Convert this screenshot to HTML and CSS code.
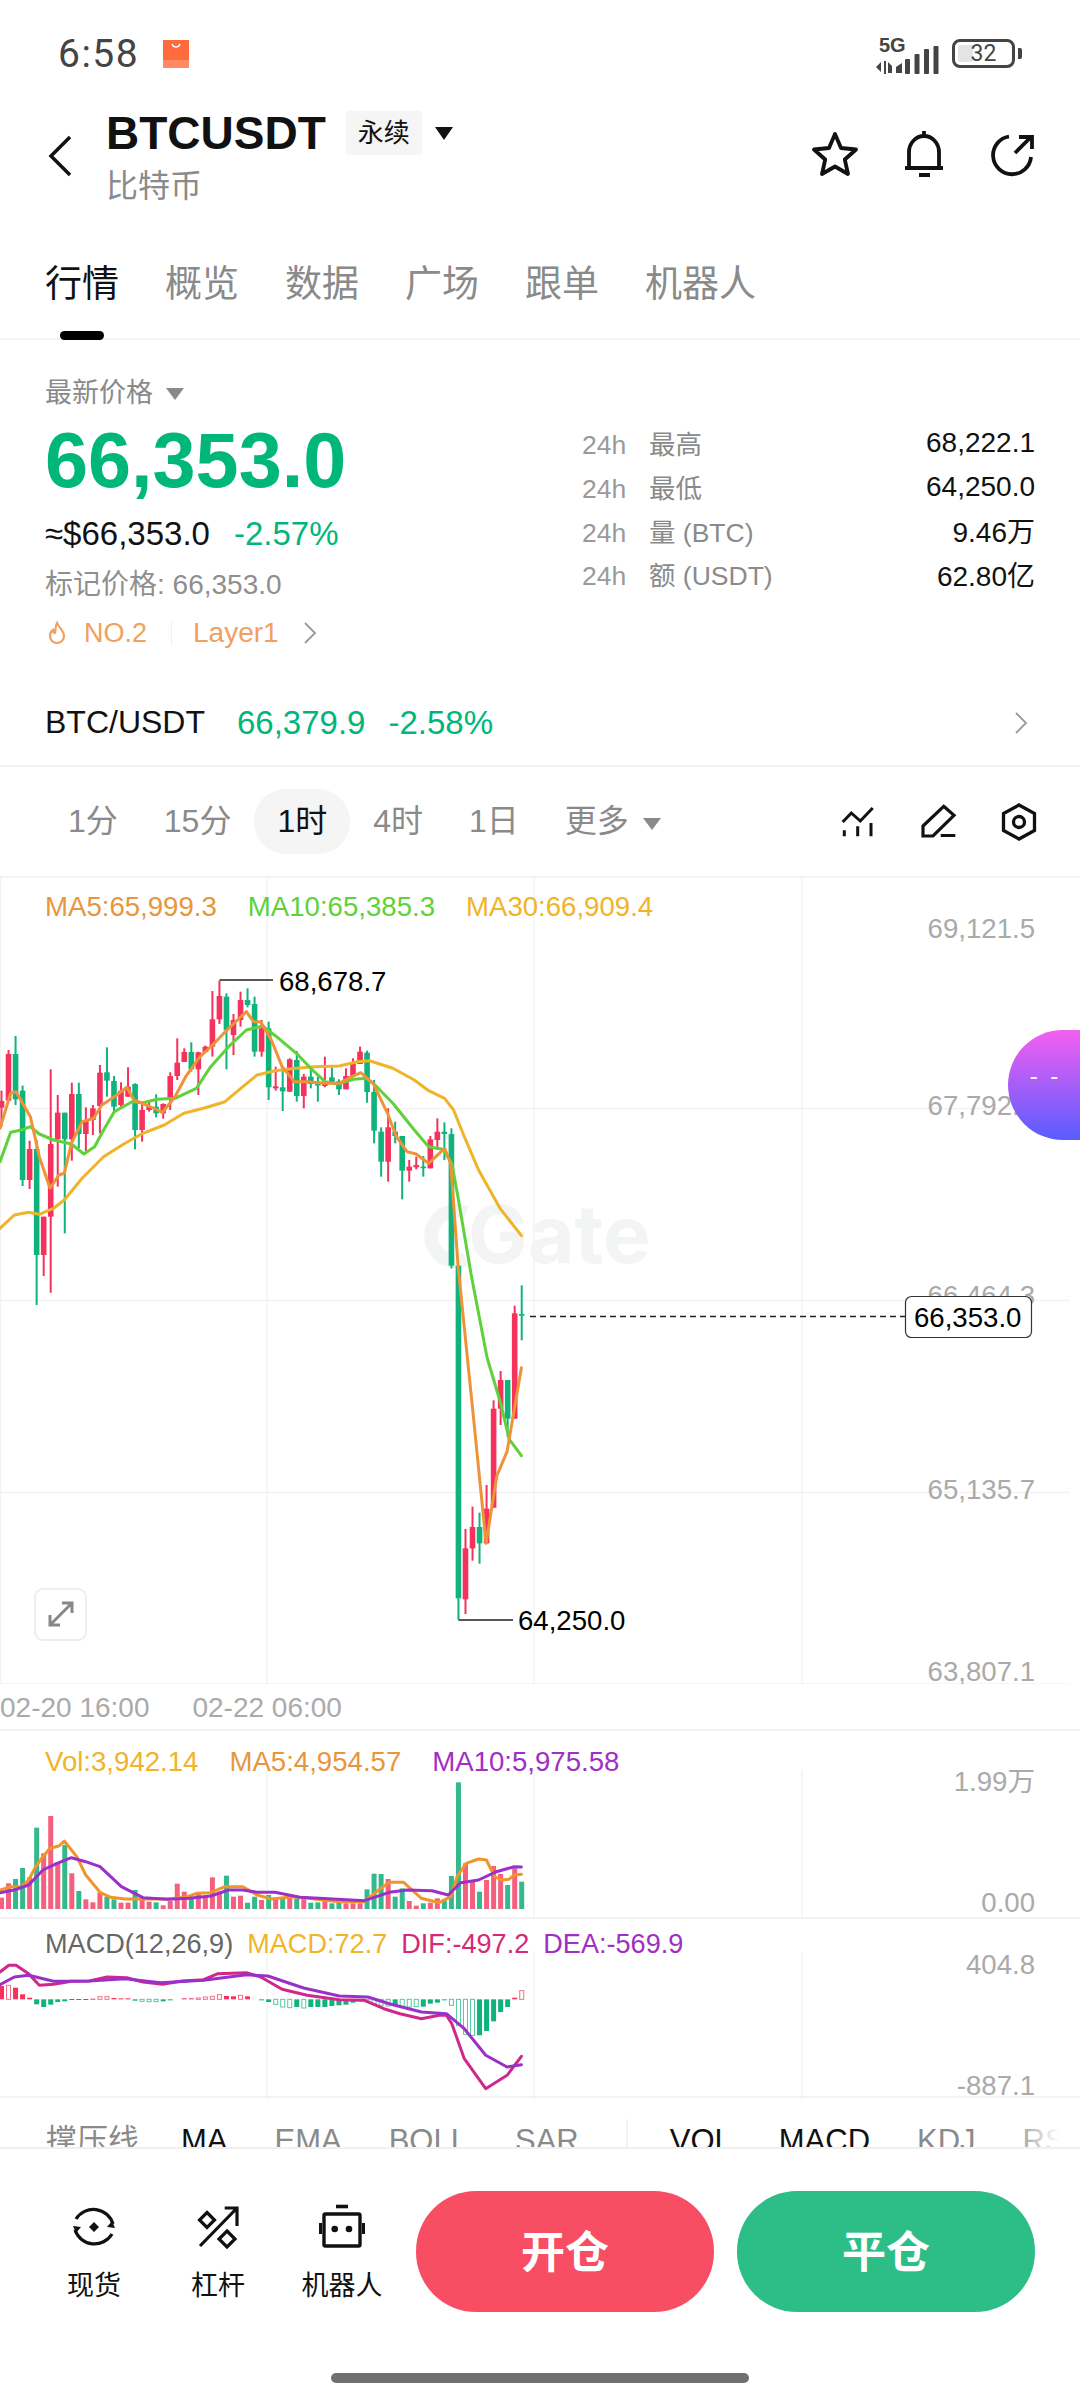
FILE: index.html
```html
<!DOCTYPE html>
<html lang="zh-CN">
<head>
    <meta charset="UTF-8">
    <meta name="viewport" content="width=device-width, initial-scale=1.0">
    <title>BTCUSDT 行情</title>
    <link rel="stylesheet" href="styles.css">
</head>
<body>
    <div class="status-bar">
        <span class="clock">6:58</span>
        <svg class="shop-icon" width="26" height="28" viewBox="0 0 26 28">
            <rect width="26" height="28" fill="#ff6b3d"/>
            <rect y="20" width="26" height="8" fill="#ff8a63"/>
            <path d="M9 4c1 4 7 4 8 0" fill="none" stroke="#fff" stroke-width="1.3"/>
        </svg>
        <div class="status-right">
            <div class="signal">
                <span class="net">5G</span>
                <svg width="64" height="30" viewBox="0 0 64 30">
                    <path d="M5 16l-5 5 5 5zM8 15h2v13H8zM12 16l4 4v7h-4zM20 21l6-4v10h-6z" fill="#444"/>
                    <rect x="29" y="13" width="5" height="15" rx="1" fill="#444"/>
                    <rect x="38.500" y="8" width="5" height="20" rx="1" fill="#444"/>
                    <rect x="48" y="3" width="5" height="25" rx="1" fill="#444"/>
                    <rect x="57.500" y="0" width="5" height="28" rx="1" fill="#444"/>
                </svg>
            </div>
            <div class="battery"><i class="battery-level"></i><span>32</span></div>
            <i class="battery-cap"></i>
        </div>
    </div>

    <div class="topbar">
        <svg class="back" width="24" height="42" viewBox="0 0 24 42">
            <path d="M22 2L3 21l19 19" fill="none" stroke="#111" stroke-width="3.500"/>
        </svg>
        <div class="title-block">
            <div class="title-row">
                <span class="symbol">BTCUSDT</span>
                <span class="tag">永续</span>
                <i class="caret caret-dark"></i>
            </div>
            <div class="coin-name">比特币</div>
        </div>
        <div class="top-actions">
            <svg width="48" height="48" viewBox="0 0 48 48" fill="none" stroke="#111" stroke-width="3.800" stroke-linejoin="round">
                <path d="M24 4l6 14 15 1.500-11.200 10L37 44l-13-7.500L11 44l3.200-14.500L3 19.500 18 18z"/>
            </svg>
            <svg width="48" height="48" viewBox="0 0 48 48" fill="none" stroke="#111" stroke-width="3.800">
                <path d="M9 38V22a15 16 0 0 1 30 0v16M5 38h38M24 1v5"/>
                <rect x="19" y="43" width="11" height="4" fill="#111" stroke="none"/>
            </svg>
            <svg width="48" height="48" viewBox="0 0 48 48" fill="none" stroke="#111" stroke-width="3.800">
                <path d="M20 6.500A19 19 0 1 0 42 27M26 23L42 7M30 7h13v12"/>
            </svg>
        </div>
    </div>

    <div class="tabs">
        <span class="tab active">行情</span>
        <span class="tab">概览</span>
        <span class="tab">数据</span>
        <span class="tab">广场</span>
        <span class="tab">跟单</span>
        <span class="tab">机器人</span>
    </div>

    <div class="summary">
        <div class="summary-left">
            <div class="price-label">最新价格 <i class="caret caret-gray"></i></div>
            <div class="last-price">66,353.0</div>
            <div class="fiat-row"><span>≈$66,353.0</span><span class="down">-2.57%</span></div>
            <div class="mark-price">标记价格: 66,353.0</div>
            <div class="rank-row">
                <svg width="20" height="24" viewBox="0 0 20 24" fill="none" stroke="#f0a060" stroke-width="2.200">
                    <path d="M10 2c1 4 7 7 7 13a7 7 0 0 1-14 0c0-3 1.500-5 3-6 0 2 1 3 2 3 1-3 0-7 2-10z"/>
                </svg>
                <span class="rank rank-no">NO.2</span>
                <i class="rank-divider"></i>
                <span class="rank">Layer1</span>
                <svg class="rank-more" width="14" height="22" viewBox="0 0 14 22">
                    <path d="M2 1l10 10L2 21" fill="none" stroke="#999" stroke-width="1.800"/>
                </svg>
            </div>
        </div>
        <div class="stats">
            <div class="stat"><span class="stat-name"><b>24h</b>最高</span><span class="stat-value">68,222.1</span></div>
            <div class="stat"><span class="stat-name"><b>24h</b>最低</span><span class="stat-value">64,250.0</span></div>
            <div class="stat"><span class="stat-name"><b>24h</b>量 (BTC)</span><span class="stat-value">9.46万</span></div>
            <div class="stat"><span class="stat-name"><b>24h</b>额 (USDT)</span><span class="stat-value">62.80亿</span></div>
        </div>
    </div>

    <div class="spot-row">
        <span>BTC/USDT</span>
        <span class="down spot-price">66,379.9</span>
        <span class="down">-2.58%</span>
        <svg class="spot-more" width="14" height="22" viewBox="0 0 14 22">
            <path d="M2 1l10 10L2 21" fill="none" stroke="#999" stroke-width="1.800"/>
        </svg>
    </div>

    <div class="periods">
        <span class="period">1分</span>
        <span class="period">15分</span>
        <span class="period active">1时</span>
        <span class="period">4时</span>
        <span class="period">1日</span>
        <span class="period">更多 <i class="caret caret-gray"></i></span>
        <div class="chart-tools">
            <svg width="40" height="40" viewBox="0 0 40 40" fill="none" stroke="#111" stroke-width="3">
                <path d="M5.700 20L14.300 11l9 8L35.700 6M7.300 28.300v6M20.700 24.300v10M34 21v13.300"/>
            </svg>
            <svg width="40" height="40" viewBox="0 0 40 40" fill="none" stroke="#111" stroke-width="3.200">
                <path d="M25.700 4.300L36 13.300 15 34H5V24zM22.700 33.500h14.600"/>
            </svg>
            <svg width="40" height="40" viewBox="0 0 40 40" fill="none" stroke="#111" stroke-width="3.300">
                <path d="M20 3l15.500 8.500v17L20 37 4.500 28.500v-17z"/>
                <circle cx="20" cy="20" r="5.500"/>
            </svg>
        </div>
    </div>

    <div class="kline">
        <svg class="pane-svg" width="1080" height="806" viewBox="0 878 1080 806">
            <path class="grid" d="M267 878V1684M534 878V1684M802 878V1684M0 1108.500H1070M0 1300.500H1070M0 1492.500H1070M0 1684H1070M0.500 878V1684"/>
            <g class="watermark">
                <path d="M466 1213a25 25 0 1 0 0 46" fill="none" stroke="#f3f5f5" stroke-width="14"/>
                <text x="468" y="1263">Gate</text>
            </g>
            <g id="candles"></g>
            <g id="kline-lines"></g>
            <text class="axis" x="1035" y="938">69,121.5</text>
            <text class="axis" x="1035" y="1115">67,792.8</text>
            <text class="axis" x="1035" y="1305">66,464.3</text>
            <text class="axis" x="1035" y="1499">65,135.7</text>
            <text class="axis" x="1035" y="1681">63,807.1</text>
            <path d="M219.500 980H273M458.500 1620H513" fill="none" stroke="#222" stroke-width="1.500"/>
            <text class="mark" x="279" y="991">68,678.7</text>
            <text class="mark" x="518" y="1630">64,250.0</text>
            <path d="M530 1316.500H905" stroke="#222" stroke-width="1.500" stroke-dasharray="6 4"/>
            <rect x="905.500" y="1296.500" width="126" height="41" rx="6" fill="#fff" stroke="#333" stroke-width="1.200"/>
            <text class="mark" x="914" y="1327">66,353.0</text>
            <rect x="35" y="1589" width="51" height="51" rx="8" fill="#fff" stroke="#eee" stroke-width="2"/>
            <path d="M50 1625l22-22M62 1603h10v10M60 1625H50v-10" fill="none" stroke="#888" stroke-width="3"/>
        </svg>
        <div class="legend legend-main">
            <span class="c-orange">MA5:65,999.3</span>
            <span class="c-green">MA10:65,385.3</span>
            <span class="c-yellow">MA30:66,909.4</span>
        </div>
    </div>

    <div class="time-axis">
        <span>02-20 16:00</span>
        <span>02-22 06:00</span>
    </div>

    <div class="pane pane-vol">
        <svg class="pane-svg" width="1080" height="186" viewBox="0 1731 1080 186">
            <path class="grid" d="M267 1770V1917M534 1770V1917M802 1770V1917"/>
            <g id="volume"></g>
            <text class="axis" x="1035" y="1791">1.99万</text>
            <text class="axis" x="1035" y="1912">0.00</text>
        </svg>
        <div class="legend">
            <span class="c-yellow">Vol:3,942.14</span>
            <span class="c-orange">MA5:4,954.57</span>
            <span class="c-purple">MA10:5,975.58</span>
        </div>
    </div>

    <div class="pane pane-macd">
        <svg class="pane-svg" width="1080" height="181" viewBox="0 1917 1080 181">
            <path class="grid" d="M267 1950V2098M534 1950V2098M802 1950V2098"/>
            <g id="macd"></g>
            <text class="axis" x="1035" y="1972">404.8</text>
            <text class="axis" x="1035" y="2093">-887.1</text>
        </svg>
        <div class="legend legend-tight">
            <span class="c-gray">MACD(12,26,9)</span>
            <span class="c-yellow">MACD:72.7</span>
            <span class="c-pink">DIF:-497.2</span>
            <span class="c-purple">DEA:-569.9</span>
        </div>
    </div>

    <div class="indicators">
        <span class="first">撑压线</span>
        <span class="on">MA</span>
        <span>EMA</span>
        <span>BOLL</span>
        <span>SAR</span>
        <i class="ind-divider"></i>
        <span class="on">VOL</span>
        <span class="on">MACD</span>
        <span>KDJ</span>
        <span class="fade">RSI</span>
    </div>

    <div class="bottom-bar">
        <div class="trade-row">
            <div class="action">
                <svg width="48" height="48" viewBox="0 0 48 48" fill="none" stroke="#111" stroke-width="3.200">
                    <path d="M6 16A20.500 20.500 0 0 1 43 21M42 31A20.500 20.500 0 0 1 5 27"/>
                    <path d="M45 25l-8-1 5-6zM3 23l8 1-5 6zM24 19l5 5-5 5-5-5z" fill="#111" stroke="none"/>
                </svg>
                <span>现货</span>
            </div>
            <div class="action">
                <svg width="48" height="48" viewBox="0 0 48 48" fill="none" stroke="#111" stroke-width="3.200">
                    <path d="M6 43L43 5M30.700 5H43v18M13 9.500l7.500 7.500-7.500 7.500L5.500 17zM33 28l8 8-8 8-8-8z"/>
                </svg>
                <span>杠杆</span>
            </div>
            <div class="action">
                <svg width="48" height="48" viewBox="0 0 48 48" fill="none" stroke="#111" stroke-width="3.400">
                    <rect x="6" y="11" width="36" height="32" rx="1.500"/>
                    <path d="M18 3.500h12" stroke-width="3.600"/>
                    <path d="M2.500 20v11M45.500 20v11" stroke-width="3"/>
                    <circle cx="16.700" cy="26" r="3.300" fill="#111" stroke="none"/>
                    <circle cx="31" cy="26" r="3.300" fill="#111" stroke="none"/>
                </svg>
                <span>机器人</span>
            </div>
            <div class="trade-buttons">
                <button class="btn btn-open">开仓</button>
                <button class="btn btn-close">平仓</button>
            </div>
        </div>
        <div class="home-bar"></div>
    </div>

    <div class="float-ball"><span>- -</span></div>

    <script src="chart.js"></script>
</body>
</html>
```
FILE: styles.css
```css
* {
    box-sizing: border-box;
}
body {
    margin: 0;
    width: 1080px;
    height: 2400px;
    position: relative;
    overflow: hidden;
    background: #fff;
    color: #111;
    font-family: "Liberation Sans", "Noto Sans CJK SC", sans-serif;
}
i {
    display: block;
    font-style: normal;
}
.down {
    color: #00b67a;
}

.status-bar {
    height: 100px;
    display: flex;
    align-items: flex-start;
    padding: 34px 0 0 58px;
    position: relative;
}
.clock {
    font-family: Roboto, sans-serif;
    font-size: 39px;
    line-height: 40px;
    letter-spacing: 1.5px;
    color: #444;
}
.shop-icon {
    margin: 6px 0 0 24px;
}
.status-right {
    margin-left: auto;
    display: flex;
    align-items: flex-start;
    padding-right: 58px;
}
.signal {
    width: 64px;
    height: 34px;
    position: relative;
    margin: 5px 12px 0 0;
}
.signal svg {
    position: absolute;
    left: 0;
    top: 7px;
}
.net {
    position: absolute;
    left: 3px;
    top: -4px;
    font-size: 20px;
    line-height: 20px;
    font-weight: bold;
    color: #444;
    background: #fff;
    padding-right: 2px;
}
.battery {
    width: 63px;
    height: 29px;
    margin-top: 5px;
    border: 3px solid #444;
    border-radius: 8px;
    position: relative;
    text-align: center;
}
.battery span {
    position: relative;
    font-family: Roboto, sans-serif;
    font-size: 23px;
    line-height: 23px;
    color: #444;
}
.battery-level {
    position: absolute;
    left: 3px;
    top: 3px;
    width: 15px;
    height: 17px;
    background: #e4e4e4;
    border-radius: 2px;
}
.battery-cap {
    width: 4px;
    height: 11px;
    margin: 14px 0 0 3px;
    background: #444;
    border-radius: 0 2px 2px 0;
}

.topbar {
    height: 140px;
    display: flex;
    padding: 6px 0 0 48px;
    position: relative;
}
.back {
    margin: 29px 0 0 0;
}
.title-block {
    margin-left: 34px;
}
.title-row {
    display: flex;
    align-items: center;
    height: 54px;
}
.symbol {
    font-size: 46px;
    font-weight: bold;
    line-height: 54px;
}
.tag {
    margin: 0 0 0 20px;
    padding: 0 12px;
    height: 44px;
    line-height: 44px;
    font-size: 26px;
    background: #f5f5f5;
    border-radius: 4px;
}
.caret {
    width: 0;
    height: 0;
    display: inline-block;
    border-left: 9px solid transparent;
    border-right: 9px solid transparent;
}
.caret-dark {
    margin: 0 0 0 13px;
    border-top: 13px solid #111;
}
.caret-gray {
    border-top: 12px solid #8a8a8a;
    vertical-align: 2px;
    margin-left: 5px;
}
.coin-name {
    margin-top: 4px;
    font-size: 32px;
    line-height: 44px;
    color: #8a8a8a;
}
.top-actions {
    position: absolute;
    right: 43px;
    top: 30px;
    display: flex;
    gap: 41px;
}

.tabs {
    height: 100px;
    padding: 20px 0 0 45px;
    display: flex;
    gap: 46px;
    border-bottom: 2px solid #f3f3f3;
    font-size: 37px;
    line-height: 50px;
    color: #8a8a8a;
}
.tab {
    position: relative;
    height: 80px;
}
.tab.active {
    color: #111;
}
.tab.active::after {
    content: "";
    position: absolute;
    left: 15px;
    bottom: 0;
    width: 44px;
    height: 9px;
    border-radius: 5px;
    background: #000;
}

.summary {
    height: 310px;
    padding: 35px 45px 0;
    display: grid;
    grid-template-columns: 537px 1fr;
}
.price-label {
    font-size: 27px;
    line-height: 36px;
    color: #8a8a8a;
}
.last-price {
    margin-top: 11px;
    font-size: 77.4px;
    line-height: 76px;
    font-weight: bold;
    color: #00b67a;
}
.fiat-row {
    margin-top: 16px;
    display: flex;
    gap: 24px;
    font-size: 33px;
    line-height: 40px;
}
.mark-price {
    margin-top: 13px;
    font-size: 28px;
    line-height: 36px;
    color: #8f8f8f;
}
.rank-row {
    margin-top: 12px;
    height: 36px;
    display: flex;
    align-items: center;
    padding-left: 2px;
}
.rank {
    font-size: 28px;
    color: #f0a060;
}
.rank-no {
    font-size: 27px;
}
.rank-row svg:first-child {
    margin-right: 17px;
}
.rank-divider {
    width: 1px;
    height: 26px;
    margin: 0 21px 0 24px;
    background: #f0f0f0;
}
.rank-more {
    margin-left: 24px;
}
.stats {
    padding-top: 46px;
    font-size: 26.5px;
}
.stat {
    height: 43.7px;
    display: flex;
    justify-content: space-between;
    align-items: center;
}
.stat-name {
    color: #8a8a8a;
}
.stat-name b {
    display: inline-block;
    width: 67px;
    font-weight: normal;
    color: #9a9a9a;
}
.stat-value {
    font-size: 28px;
    color: #111;
}

.spot-row {
    height: 117px;
    padding: 30px 52px 0 45px;
    display: flex;
    align-items: center;
    gap: 23px;
    font-size: 32px;
    border-bottom: 2px solid #f3f3f3;
}
.spot-row .down {
    font-size: 33px;
}
.spot-price {
    margin-left: 9px;
}
.spot-more {
    margin-left: auto;
}

.periods {
    height: 111px;
    padding: 0 41px 0 45px;
    display: flex;
    align-items: center;
    font-size: 32px;
    color: #8a8a8a;
    border-bottom: 2px solid #f3f3f3;
}
.period {
    padding: 0 23px;
    height: 65px;
    line-height: 65px;
}
.period.active {
    color: #111;
    background: #f5f5f5;
    border-radius: 32px;
}
.chart-tools {
    margin-left: auto;
    display: flex;
    gap: 41px;
}

.kline {
    height: 806px;
    position: relative;
}
.pane {
    position: relative;
}
.pane-vol {
    height: 186px;
    padding-top: 13px;
}
.pane-macd {
    height: 181px;
    padding-top: 7px;
    border-top: 2px solid #f3f3f3;
    border-bottom: 2px solid #f3f3f3;
}
.pane-svg {
    position: absolute;
    left: 0;
    top: 0;
}
.legend {
    position: relative;
    display: flex;
    gap: 31px;
    padding-left: 45px;
    font-size: 27.6px;
    line-height: 36px;
    white-space: nowrap;
}
.legend-main {
    padding-top: 11px;
}
.legend-tight {
    gap: 14px;
    font-size: 27.1px;
}
.c-orange {
    color: #e8963e;
}
.c-green {
    color: #5fd13a;
}
.c-yellow {
    color: #f0b429;
}
.c-purple {
    color: #a02fc4;
}
.c-pink {
    color: #d42a78;
}
.c-gray {
    color: #666;
}

.grid {
    fill: none;
    stroke: #f3f3f3;
    stroke-width: 1.5;
}
.watermark text {
    font-family: Inter, sans-serif;
    font-size: 80px;
    font-weight: bold;
    fill: #f3f5f5;
}
.axis {
    font-size: 27.6px;
    fill: #aaa;
    text-anchor: end;
}
.mark {
    font-size: 27.6px;
    fill: #000;
}

.time-axis {
    height: 47px;
    display: flex;
    gap: 43px;
    font-size: 28px;
    line-height: 48px;
    color: #aaa;
    border-bottom: 2px solid #f3f3f3;
}

.indicators {
    height: 49px;
    overflow: hidden;
    position: relative;
    padding: 21px 0 0 46px;
    display: flex;
    gap: 47px;
    font-size: 31px;
    line-height: 44px;
    color: #8a8a8a;
    white-space: nowrap;
}
.indicators::after {
    content: "";
    position: absolute;
    right: 0;
    top: 0;
    width: 70px;
    height: 49px;
    background: linear-gradient(to right, rgba(255, 255, 255, 0), #fff 70%);
}
.indicators .first {
    margin-right: -5px;
}
.indicators .on {
    color: #111;
}
.ind-divider {
    width: 2px;
    height: 40px;
    margin-right: -5px;
    background: #f3f3f3;
}

.bottom-bar {
    height: 253px;
    padding-top: 42px;
    border-top: 2px solid #f0f0f0;
    background: #fff;
}
.trade-row {
    display: flex;
    padding-left: 32px;
}
.action {
    width: 124px;
    padding-top: 12px;
    display: flex;
    flex-direction: column;
    align-items: center;
    gap: 17px;
    font-size: 27px;
    line-height: 36px;
}
.trade-buttons {
    margin-left: 12px;
    display: flex;
    gap: 23px;
}
.btn {
    width: 298px;
    height: 121px;
    padding: 0 0 6px;
    border: none;
    border-radius: 60px;
    color: #fff;
    font-family: inherit;
    font-size: 44px;
    font-weight: bold;
}
.btn-open {
    background: #f84e63;
}
.btn-close {
    background: #2dbe87;
}
.home-bar {
    width: 418px;
    height: 10px;
    margin: 61px auto 0;
    border-radius: 5px;
    background: #6f6f6f;
}

.float-ball {
    position: absolute;
    left: 1008px;
    top: 1030px;
    width: 72px;
    height: 110px;
    border-radius: 55px 0 0 55px;
    background: linear-gradient(to bottom, #f45ff0, #a65ef8 50%, #5a5cff);
    color: #fff;
    font-size: 24px;
    line-height: 92px;
    word-spacing: 6px;
    text-align: center;
}
```
FILE: chart.js
```js
// coordinates below were measured at 2.8x horizontally, 3x vertically
const RED = '#f5325c';
const GREEN = '#0fb37b';
const VOL_RED = '#f5607e';
const VOL_GREEN = '#35b98c';

const candleX = i => 1.5 + 7.03 * i;

// [colour, high, body top, body bottom, low]
const candles = [
    ['r',632,663,683,740], ['r',510,522,662,662], ['g',468,522,658,675], ['g',617,632,900,918],
    ['r',782,807,900,927], ['g',780,807,1125,1275], ['r',1010,1010,1125,1188], ['r',568,792,1010,1238],
    ['r',645,698,778,920], ['g',698,698,778,1060], ['r',608,642,778,842], ['g',608,642,762,805],
    ['r',682,720,762,815], ['r',675,685,720,765], ['r',555,578,678,760], ['g',502,577,602,650],
    ['g',588,603,680,695], ['r',607,632,675,680], ['r',562,620,650,650], ['g',610,612,750,808],
    ['r',672,690,750,785], ['r',665,678,690,695], ['g',643,680,700,712], ['r',670,672,700,716],
    ['r',577,588,660,690], ['r',475,548,588,600], ['r',505,516,546,546], ['g',487,516,568,575],
    ['r',515,517,568,645], ['r',497,500,516,516], ['r',333,418,500,530], ['r',302,348,418,432],
    ['g',340,350,450,568], ['r',402,420,465,525], ['r',335,360,420,440], ['g',325,360,375,382],
    ['g',350,372,515,530], ['r',420,445,515,530], ['g',425,445,622,660], ['r',560,619,625,632],
    ['g',560,622,634,693], ['r',535,538,635,636], ['g',513,540,648,665], ['r',582,590,648,685],
    ['g',560,590,612,625], ['g',590,612,614,665], ['r',530,604,618,622], ['g',562,592,612,612],
    ['g',598,604,628,645], ['r',565,588,628,628], ['r',535,550,588,588], ['r',500,515,552,552],
    ['g',512,518,636,668], ['g',600,636,752,790], ['g',742,755,845,890], ['r',685,742,845,905],
    ['g',725,755,768,790], ['g',768,768,872,958], ['r',840,860,872,905], ['r',830,855,862,868],
    ['g',828,860,864,890], ['r',768,778,865,865], ['r',715,755,780,810], ['g',727,755,762,840],
    ['g',745,762,1157,1165], ['g',1157,1157,2155,2219], ['r',1947,2005,2158,2202], ['r',1880,1941,2005,2042],
    ['g',1898,1941,1990,2051], ['r',1815,1886,1990,1990], ['r',1561,1586,1883,1883], ['r',1473,1500,1586,1635],
    ['g',1500,1500,1616,1671], ['r',1277,1300,1616,1616], ['g',1216,1302,1307,1381]
];

const ma5 = [[0,745],[30,640],[45,635],[85,710],[110,830],[140,925],[165,885],[180,880],[200,790],[230,725],[262,715],[285,675],[320,650],[355,622],[375,660],[410,675],[455,697],[490,650],[520,590],[560,530],[600,490],[640,445],[690,395],[710,425],[730,425],[760,480],[790,560],[825,605],[860,605],[910,610],[950,610],[985,590],[1010,578],[1045,610],[1085,700],[1110,770],[1140,815],[1165,822],[1200,850],[1245,805],[1262,850],[1283,1163],[1326,1616],[1361,1990],[1391,1788],[1420,1714],[1460,1463]];
const ma10 = [[0,845],[30,757],[60,750],[85,740],[110,762],[150,780],[200,792],[235,822],[265,800],[290,750],[320,695],[370,665],[400,668],[440,658],[490,655],[550,625],[590,560],[640,500],[690,450],[735,438],[780,475],[830,520],[870,565],[910,605],[945,612],[990,598],[1025,595],[1050,615],[1100,670],[1160,750],[1200,800],[1240,808],[1265,850],[1283,955],[1320,1188],[1364,1433],[1401,1567],[1426,1678],[1460,1727]];
const ma30 = [[0,1045],[40,1005],[80,997],[110,1003],[150,985],[180,960],[230,895],[290,830],[350,790],[400,760],[460,735],[515,700],[570,685],[630,665],[680,620],[720,585],[770,572],[830,565],[880,560],[950,558],[1000,545],[1035,542],[1100,565],[1160,600],[1200,632],[1245,655],[1270,690],[1300,770],[1340,870],[1400,985],[1460,1067]];

// [colour, bar top]
const volumes = [
    ['r',533],['r',490],['g',477],['g',444],['r',472],['g',323],['r',400],['r',288],['r',427],['g',375],
    ['r',460],['g',513],['r',538],['r',547],['r',518],['g',530],['g',538],['r',548],['r',548],['g',510],
    ['r',535],['r',545],['g',547],['r',556],['r',543],['r',491],['r',515],['g',535],['r',517],['r',532],
    ['r',472],['r',515],['g',467],['r',530],['r',527],['g',548],['g',530],['r',540],['g',525],['r',540],
    ['g',535],['r',533],['g',535],['r',535],['g',548],['g',547],['r',540],['g',550],['g',548],['r',550],
    ['r',550],['r',550],['g',508],['g',461],['g',462],['r',477],['g',530],['g',505],['r',543],['r',557],
    ['g',550],['r',548],['r',535],['g',538],['g',468],['g',187],['r',430],['r',485],['g',515],['r',480],
    ['r',438],['r',462],['g',495],['r',445],['g',485]
];
const volMa5 = [[0,510],[30,500],[60,500],[80,480],[100,440],[120,410],[140,385],[165,378],[180,363],[215,410],[240,465],[280,517],[310,532],[350,537],[400,537],[470,537],[520,532],[550,520],[590,518],[630,500],[680,500],[720,525],[760,537],[820,530],[880,537],[950,545],[1020,545],[1060,510],[1090,487],[1130,487],[1180,535],[1230,548],[1262,530],[1280,470],[1305,430],[1340,417],[1362,420],[1385,470],[1405,480],[1425,478],[1440,465],[1460,463]];
const volMa10 = [[0,518],[40,510],[80,495],[120,450],[160,430],[200,413],[240,425],[280,440],[340,500],[400,533],[470,538],[530,535],[590,528],[640,510],[680,510],[720,517],[770,517],[840,532],[920,536],[1020,542],[1090,517],[1140,510],[1210,512],[1255,525],[1290,488],[1340,480],[1390,455],[1440,440],[1460,441]];

// histogram ends, zero line at 292; null = no bar
const macdBars = [252,250,257,277,287,307,315,308,300,298,291,291,291,290,284,284,288,289,289,296,298,299,299,298,295,null,289,289,288,285,283,278,282,283,280,283,null,295,300,307,315,317,315,318,315,315,315,312,310,308,302,298,298,305,310,312,312,315,315,314,314,305,302,295,310,370,397,400,400,387,358,330,315,287,266];
const macdHollow = [1,14,15,20,21,22,28,29,30,31,34,39,40,41,43,52,53,54,55,57,58,59,64,65,66,67,74];
const dif = [[0,210],[25,190],[45,190],[80,215],[110,250],[150,247],[200,238],[250,237],[300,225],[355,227],[400,240],[455,247],[510,237],[570,233],[610,215],[690,212],[730,225],[790,262],[860,280],[950,293],[1020,295],[1075,320],[1120,335],[1180,350],[1230,340],[1250,340],[1265,365],[1300,470],[1360,560],[1420,520],[1460,463]];
const dea = [[0,248],[40,225],[80,220],[150,238],[250,237],[350,230],[450,242],[570,235],[690,218],[750,222],[850,258],[950,282],[1030,285],[1090,305],[1180,330],[1250,335],[1300,380],[1360,460],[1420,495],[1460,488]];

function line(points, toY, colour, width) {
    const pts = points.map(p => (p[0] / 2.8).toFixed(1) + ',' + toY(p[1]).toFixed(1)).join(' ');
    return `<polyline points="${pts}" fill="none" stroke="${colour}" stroke-width="${width}" stroke-linejoin="round" stroke-linecap="round"/>`;
}

function drawKline() {
    const y = v => 880 + v / 3;
    let out = '';
    candles.forEach((c, i) => {
        const colour = c[0] === 'r' ? RED : GREEN;
        const x = candleX(i);
        out += `<rect x="${x - 1}" y="${y(c[1])}" width="2" height="${(c[4] - c[1]) / 3}" fill="${colour}"/>`;
        out += `<rect x="${x - 2.8}" y="${y(c[2])}" width="5.6" height="${Math.max((c[3] - c[2]) / 3, 1.5)}" fill="${colour}"/>`;
    });
    document.getElementById('candles').innerHTML = out;
    document.getElementById('kline-lines').innerHTML =
        line(ma30, y, '#f0b429', 3) + line(ma10, y, '#5fd13a', 3) + line(ma5, y, '#ee9338', 3);
}

function drawVolume() {
    const y = v => 1720 + v / 3;
    let out = '';
    volumes.forEach((v, i) => {
        const colour = v[0] === 'r' ? VOL_RED : VOL_GREEN;
        out += `<rect x="${candleX(i) - 2.5}" y="${y(v[1])}" width="5" height="${(567 - v[1]) / 3}" fill="${colour}"/>`;
    });
    out += line(volMa5, y, '#f0952a', 3) + line(volMa10, y, '#9b30c8', 3);
    document.getElementById('volume').innerHTML = out;
}

function drawMacd() {
    const y = v => 1900 + v / 3;
    const zero = 292;
    let out = '';
    macdBars.forEach((v, i) => {
        if (v === null) return;
        const colour = v < zero ? RED : GREEN;
        const top = y(Math.min(v, zero));
        const h = Math.max(Math.abs(v - zero) / 3, 1);
        const x = candleX(i) - 2.5;
        if (macdHollow.includes(i)) {
            out += `<rect x="${x + 0.5}" y="${top}" width="4" height="${h}" fill="#fff" stroke="${colour}" stroke-width="1" opacity="0.7"/>`;
        } else {
            out += `<rect x="${x}" y="${top}" width="5" height="${h}" fill="${colour}"/>`;
        }
    });
    out += line(dif, y, '#d0288a', 3) + line(dea, y, '#9b30c8', 3);
    document.getElementById('macd').innerHTML = out;
}

drawKline();
drawVolume();
drawMacd();
```
